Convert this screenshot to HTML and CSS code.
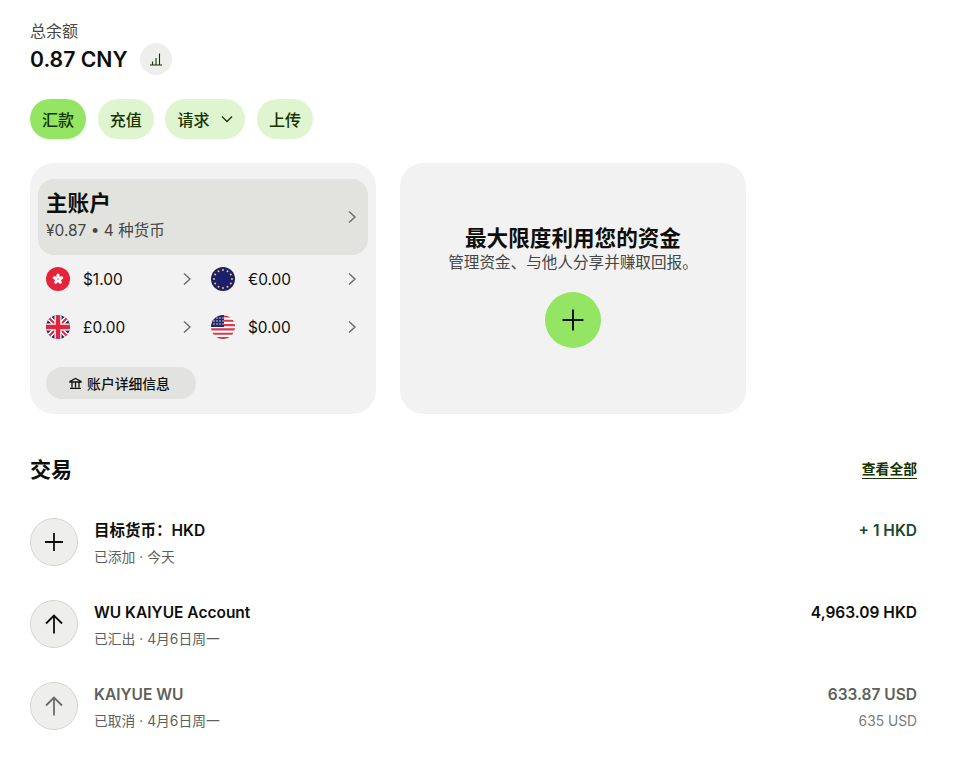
FILE: index.html
```html
<!DOCTYPE html>
<html lang="zh-CN">
<head>
  <meta charset="UTF-8">
  <meta name="viewport" content="width=device-width, initial-scale=1.0">
  <title>总余额</title>
  <link rel="stylesheet" href="styles.css">
</head>
<body>
  <div class="balance-label">总余额</div>
  <div class="balance">
    <span class="balance-amount">0.87 CNY</span>
    <span class="chart-btn">
      <svg width="14" height="14" viewBox="0 0 14 14" fill="none" stroke="#163300" stroke-width="1.100"><path d="M1 13h12M3.500 13V9.500M7 13V6M10.500 13V1.500"/></svg>
    </span>
  </div>

  <div class="actions">
    <span class="pill primary">汇款</span>
    <span class="pill">充值</span>
    <span class="pill">请求
      <svg class="pill-caret" width="12" height="8" viewBox="0 0 12 8" fill="none" stroke="#163300" stroke-width="1.300"><path d="M1 1.500l5 5 5-5"/></svg>
    </span>
    <span class="pill">上传</span>
  </div>

  <div class="cards">
    <div class="card">
      <div class="main-account">
        <div>
          <div class="main-title">主账户</div>
          <div class="main-sub">¥0.87 • 4 种货币</div>
        </div>
        <svg class="chev" width="10" height="14" viewBox="0 0 10 14"><path d="M2 1.500L8 7l-6 5.500"/></svg>
      </div>
      <div class="currencies">
        <div class="currency">
          <svg class="flag" width="24" height="24" viewBox="0 0 24 24">
            <circle cx="12" cy="12" r="12" fill="#e5233d"/>
            <g fill="#fff">
              <ellipse cx="12" cy="9" rx="1.700" ry="2.500"/>
              <ellipse cx="12" cy="9" rx="1.700" ry="2.500" transform="rotate(72 12 12)"/>
              <ellipse cx="12" cy="9" rx="1.700" ry="2.500" transform="rotate(144 12 12)"/>
              <ellipse cx="12" cy="9" rx="1.700" ry="2.500" transform="rotate(216 12 12)"/>
              <ellipse cx="12" cy="9" rx="1.700" ry="2.500" transform="rotate(288 12 12)"/>
            </g>
          </svg>
          <span class="currency-amt">$1.00</span>
          <svg class="chev" width="10" height="14" viewBox="0 0 10 14"><path d="M2 1.500L8 7l-6 5.500"/></svg>
        </div>
        <div class="currency">
          <svg class="flag" width="24" height="24" viewBox="0 0 24 24">
            <circle cx="12" cy="12" r="12" fill="#1b1f6e"/>
            <g fill="#f5c842">
              <circle cx="12" cy="3" r="1"/><circle cx="16.500" cy="4.200" r="1"/><circle cx="19.800" cy="7.500" r="1"/>
              <circle cx="21" cy="12" r="1"/><circle cx="19.800" cy="16.500" r="1"/><circle cx="16.500" cy="19.800" r="1"/>
              <circle cx="12" cy="21" r="1"/><circle cx="7.500" cy="19.800" r="1"/><circle cx="4.200" cy="16.500" r="1"/>
              <circle cx="3" cy="12" r="1"/><circle cx="4.200" cy="7.500" r="1"/><circle cx="7.500" cy="4.200" r="1"/>
            </g>
          </svg>
          <span class="currency-amt">€0.00</span>
          <svg class="chev" width="10" height="14" viewBox="0 0 10 14"><path d="M2 1.500L8 7l-6 5.500"/></svg>
        </div>
        <div class="currency">
          <svg class="flag" width="24" height="24" viewBox="0 0 24 24">
            <defs><clipPath id="uk"><circle cx="12" cy="12" r="12"/></clipPath></defs>
            <g clip-path="url(#uk)">
              <rect width="24" height="24" fill="#1f2a6e"/>
              <path d="M0 0l24 24M24 0L0 24" stroke="#fff" stroke-width="5"/>
              <path d="M0 0l24 24M24 0L0 24" stroke="#e0263f" stroke-width="2"/>
              <path d="M12 0v24M0 12h24" stroke="#fff" stroke-width="7"/>
              <path d="M12 0v24M0 12h24" stroke="#e0263f" stroke-width="4.500"/>
            </g>
          </svg>
          <span class="currency-amt">£0.00</span>
          <svg class="chev" width="10" height="14" viewBox="0 0 10 14"><path d="M2 1.500L8 7l-6 5.500"/></svg>
        </div>
        <div class="currency">
          <svg class="flag" width="24" height="24" viewBox="0 0 24 24">
            <defs><clipPath id="us"><circle cx="12" cy="12" r="12"/></clipPath></defs>
            <g clip-path="url(#us)">
              <rect width="24" height="24" fill="#fff"/>
              <path d="M0 1.500h24M0 5.800h24M0 10.100h24M0 14.400h24M0 18.700h24M0 23h24" stroke="#d33a4c" stroke-width="2.100"/>
              <rect width="13" height="12" fill="#23286e"/>
              <g fill="#fff">
                <circle cx="3" cy="6" r=".7"/><circle cx="6" cy="3" r=".7"/><circle cx="9" cy="3" r=".7"/><circle cx="12" cy="3" r=".7"/>
                <circle cx="6" cy="6" r=".7"/><circle cx="9" cy="6" r=".7"/><circle cx="12" cy="6" r=".7"/>
                <circle cx="3" cy="9" r=".7"/><circle cx="6" cy="9" r=".7"/><circle cx="9" cy="9" r=".7"/><circle cx="12" cy="9" r=".7"/>
              </g>
            </g>
          </svg>
          <span class="currency-amt">$0.00</span>
          <svg class="chev" width="10" height="14" viewBox="0 0 10 14"><path d="M2 1.500L8 7l-6 5.500"/></svg>
        </div>
      </div>
      <div class="details-btn">
        <svg width="13" height="13" viewBox="0 0 13 13" fill="none" stroke="#111" stroke-width="1.300"><path d="M1 4.300L6.500 1.500 12 4.300v.7H1zM3 5v5.500M6.500 5v5.500M10 5v5.500M1 11.300h11"/></svg>
        账户详细信息
      </div>
    </div>

    <div class="card promo">
      <div class="promo-title">最大限度利用您的资金</div>
      <div class="promo-sub">管理资金、与他人分享并赚取回报。</div>
      <div class="promo-add">
        <svg width="24" height="24" viewBox="0 0 24 24" fill="none" stroke="#0e0f0c" stroke-width="2"><path d="M12 1.500v21M1.500 12h21"/></svg>
      </div>
    </div>
  </div>

  <div class="tx-head">
    <h2>交易</h2>
    <span class="view-all">查看全部</span>
  </div>

  <div class="tx">
    <span class="tx-icon">
      <svg width="24" height="24" viewBox="0 0 24 24" fill="none" stroke="#0e0f0c" stroke-width="1.800"><path d="M12 3v18M3 12h18"/></svg>
    </span>
    <div class="tx-main">
      <div class="tx-title">目标货币：HKD</div>
      <div class="tx-sub">已添加 · 今天</div>
    </div>
    <div class="tx-right">
      <div class="tx-title positive">+ 1 HKD</div>
    </div>
  </div>

  <div class="tx">
    <span class="tx-icon">
      <svg width="24" height="24" viewBox="0 0 24 24" fill="none" stroke="#0e0f0c" stroke-width="1.800"><path d="M12 21.500V4M4 11.500L12 3.500l8 8"/></svg>
    </span>
    <div class="tx-main">
      <div class="tx-title">WU KAIYUE Account</div>
      <div class="tx-sub">已汇出 · 4月6日周一</div>
    </div>
    <div class="tx-right">
      <div class="tx-title">4,963.09 HKD</div>
    </div>
  </div>

  <div class="tx cancelled">
    <span class="tx-icon">
      <svg width="24" height="24" viewBox="0 0 24 24" fill="none" stroke="#6a6c6a" stroke-width="1.800"><path d="M12 21.500V4M4 11.500L12 3.500l8 8"/></svg>
    </span>
    <div class="tx-main">
      <div class="tx-title">KAIYUE WU</div>
      <div class="tx-sub">已取消 · 4月6日周一</div>
    </div>
    <div class="tx-right">
      <div class="tx-title">633.87 USD</div>
      <div class="tx-sub">635 USD</div>
    </div>
  </div>
</body>
</html>
```

FILE: styles.css
```css
* {
  box-sizing: border-box;
}
body {
  margin: 0;
  padding: 21px 44px 0 30px;
  background-color: #fff;
  color: #0e0f0c;
  font-family: Inter, "Noto Sans CJK SC", sans-serif;
}
.balance-label {
  font-size: 16px;
  line-height: 20px;
  color: #454745;
}
.balance {
  display: flex;
  align-items: center;
  gap: 12px;
  margin-top: 2px;
  height: 32px;
}
.balance-amount {
  font-size: 21.200px;
  font-weight: 600;
  line-height: 32px;
}
.chart-btn {
  width: 32px;
  height: 32px;
  border-radius: 50%;
  background-color: #eeefec;
  display: flex;
  align-items: center;
  justify-content: center;
}
.actions {
  display: flex;
  gap: 11.700px;
  margin-top: 24px;
}
.pill {
  display: flex;
  align-items: center;
  height: 40px;
  padding: 0 12px;
  border-radius: 20px;
  background-color: #dff5d0;
  color: #163300;
  font-size: 16px;
  font-weight: 500;
}
.pill.primary {
  background-color: #94e564;
}
.pill-caret {
  margin-left: 12px;
}
.cards {
  display: flex;
  gap: 24px;
  margin-top: 24px;
}
.card {
  width: 346px;
  height: 251px;
  padding: 16px 8px;
  border-radius: 24px;
  background-color: #f2f2f2;
}
.main-account {
  display: flex;
  align-items: center;
  justify-content: space-between;
  height: 76px;
  padding: 0 11px 0 8px;
  border-radius: 16px;
  background-color: #e2e3de;
}
.main-title {
  font-size: 21.600px;
  font-weight: 600;
  line-height: 25px;
}
.main-sub {
  margin-top: 3px;
  font-size: 15.500px;
  line-height: 24px;
  color: #454745;
}
.chev {
  flex: none;
  fill: none;
  stroke: #6a6c6a;
  stroke-width: 1.400;
}
.currencies {
  display: grid;
  grid-template-columns: 165px 157px;
  padding: 0 8px;
}
.currency {
  display: flex;
  align-items: center;
  height: 48px;
  padding-right: 11px;
}
.currency:nth-child(odd) {
  padding-right: 19px;
}
.currency-amt {
  flex: 1;
  margin-left: 13px;
  font-size: 15.400px;
  color: #0e0f0c;
}
.details-btn {
  display: flex;
  align-items: center;
  justify-content: center;
  gap: 5px;
  width: 150px;
  height: 32px;
  margin: 16px 0 0 8px;
  padding-right: 3px;
  border-radius: 16px;
  background-color: #e2e3de;
  font-size: 13.800px;
  font-weight: 500;
}
.promo {
  display: flex;
  flex-direction: column;
  align-items: center;
  padding: 62px 0 0;
}
.promo-title {
  font-size: 21.600px;
  font-weight: 600;
  line-height: 26px;
}
.promo-sub {
  font-size: 15.600px;
  line-height: 26px;
  margin-top: -1px;
  color: #454745;
}
.promo-add {
  display: flex;
  align-items: center;
  justify-content: center;
  width: 56px;
  height: 56px;
  margin-top: 16px;
  border-radius: 50%;
  background-color: #94e564;
}
.tx-head {
  display: flex;
  align-items: center;
  justify-content: space-between;
  margin-top: 41px;
  height: 28px;
}
.tx-head h2 {
  margin: -2px 0 0;
  font-size: 21px;
  font-weight: 600;
}
.view-all {
  font-size: 13.800px;
  font-weight: 600;
  line-height: 18px;
  margin-top: 1px;
  color: #163300;
  border-bottom: 1px solid #163300;
}
.tx {
  display: flex;
  align-items: center;
  height: 48px;
  margin-bottom: 34px;
}
.tx-head + .tx {
  margin-top: 35px;
}
.tx-icon {
  flex: none;
  display: flex;
  align-items: center;
  justify-content: center;
  width: 48px;
  height: 48px;
  border-radius: 50%;
  background-color: #eeefec;
  border: 1px solid #d5d6d2;
}
.tx-main {
  flex: 1;
  margin-left: 16px;
}
.tx-right {
  align-self: flex-start;
  text-align: right;
}
.tx-title {
  font-size: 15.500px;
  font-weight: 600;
  line-height: 24px;
  padding-top: 1px;
}
.tx-sub {
  margin-top: 4px;
  font-size: 13.800px;
  line-height: 20px;
  color: #5d5f5c;
}
.positive {
  color: #17492f;
}
.cancelled .tx-title {
  color: #5d5f5c;
}
.cancelled .tx-right .tx-sub {
  color: #7a7c79;
}
```
